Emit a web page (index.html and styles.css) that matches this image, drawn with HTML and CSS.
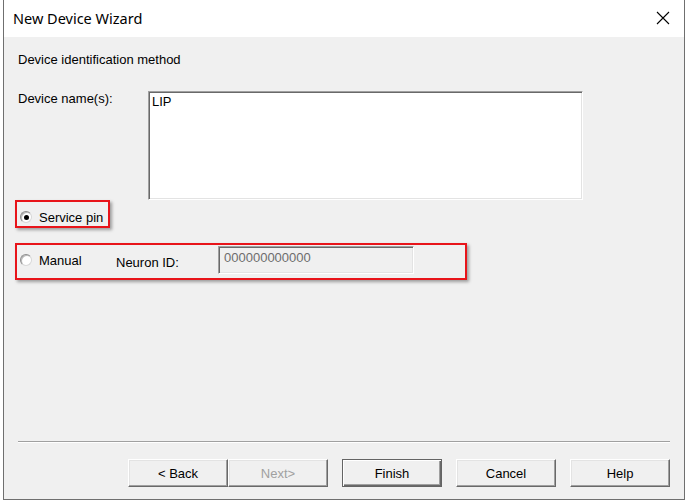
FILE: index.html
```html
<!DOCTYPE html>
<html>
<head>
<meta charset="utf-8">
<link rel="stylesheet" href="styles.css">
</head>
<body>
<div class="window">
  <div class="titlebar">
    <span class="title">New Device Wizard</span>
    <svg class="close" width="14" height="14" viewBox="0 0 14 14"><path d="M1 1 L13 13 M13 1 L1 13" stroke="#000" stroke-width="1.1" fill="none"/></svg>
  </div>
  <div class="content">
    <div class="heading">Device identification method</div>
    <div class="names-row">
      <div class="label">Device name(s):</div>
      <div class="textarea">LIP</div>
    </div>
    <div class="mark mark-service">
      <span class="radio checked"></span>
      <span class="opt">Service pin</span>
    </div>
    <div class="mark mark-manual">
      <span class="radio"></span>
      <span class="opt">Manual</span>
      <span class="neuron-label">Neuron ID:</span>
      <div class="neuron-input">000000000000</div>
    </div>
    <div class="footer">
      <div class="separator"></div>
      <div class="buttons">
        <div class="pair">
          <div class="btn">&lt; Back</div>
          <div class="btn disabled">Next&gt;</div>
        </div>
        <div class="btn default">Finish</div>
        <div class="btn">Cancel</div>
        <div class="btn">Help</div>
      </div>
    </div>
  </div>
</div>
</body>
</html>
```

FILE: styles.css
```css
html, body {
  margin: 0;
  padding: 0;
  background: #ffffff;
  width: 687px;
  height: 501px;
  overflow: hidden;
}

.window {
  margin-left: 3px;
  width: 680px;
  height: 499px;
  border-left: 1px solid #6f6f6f;
  border-right: 1px solid #6f6f6f;
  border-bottom: 1px solid #6f6f6f;
  display: flex;
  flex-direction: column;
  font-family: "Liberation Sans", Arial, sans-serif;
  font-size: 13px;
  color: #000;
}

.titlebar {
  height: 37px;
  background: #ffffff;
  display: flex;
  align-items: center;
  justify-content: space-between;
  padding: 0 14px 0 9px;
  flex-shrink: 0;
}

.title {
  font-family: "Noto Sans", "Open Sans", sans-serif;
  font-size: 14.5px;
  color: #000;
  margin-top: -1px;
}

.close {
  display: block;
  margin-top: -1px;
}

.content {
  flex: 1;
  background: #f0f0f0;
  display: flex;
  flex-direction: column;
  padding: 0 14px 0 14px;
}

.heading {
  margin-top: 15px;
  line-height: 15px;
}

.names-row {
  display: flex;
  margin-top: 24px;
}

.label {
  width: 130px;
  line-height: 15px;
}

.textarea {
  width: 430px;
  height: 105px;
  background: #fff;
  border-style: solid;
  border-width: 1px;
  border-color: #a0a0a0 #ffffff #ffffff #a0a0a0;
  box-shadow: inset 1px 1px 0 #696969, inset -1px -1px 0 #e3e3e3;
  padding: 2px 0 0 3px;
  line-height: 15px;
}

.mark {
  border: 2px solid #e8141a;
  box-shadow: 2px 2px 3px rgba(0, 0, 0, 0.35);
  margin-left: -3px;
  display: flex;
  align-items: flex-start;
  box-sizing: border-box;
}

.mark-service {
  width: 95px;
  height: 28px;
  margin-top: 0;
  padding: 9px 0 0 3px;
}

.mark-manual {
  width: 452px;
  height: 37px;
  margin-top: 15px;
  padding: 9px 0 0 3px;
}

.radio {
  width: 12px;
  height: 12px;
  border-radius: 50%;
  box-sizing: border-box;
  background: radial-gradient(circle at 60% 60%, #ffffff 0 50%, #f4f4f4 70%);
  border: 1px solid #8d8d8d;
  border-bottom-color: #d8d8d8;
  border-right-color: #d8d8d8;
  box-shadow: inset 1px 1px 0 #b8b8b8;
  position: relative;
  flex-shrink: 0;
}

.radio.checked::after {
  content: "";
  position: absolute;
  left: 2.5px;
  top: 2.5px;
  width: 5px;
  height: 5px;
  border-radius: 50%;
  background: #000;
}

.opt {
  margin-left: 7px;
  line-height: 15px;
  margin-top: -1.5px;
}

.mark-manual .opt {
  width: 77px;
}

.neuron-label {
  line-height: 15px;
  margin-top: 1px;
  width: 102px;
}

.neuron-input {
  margin-top: -8px;
  width: 189px;
  height: 23px;
  border-style: solid;
  border-width: 1px;
  border-color: #a0a0a0 #ffffff #ffffff #a0a0a0;
  box-shadow: inset 1px 1px 0 #696969, inset -1px -1px 0 #e3e3e3;
  background: #f0f0f0;
  color: #6d6d6d;
  padding: 3px 0 0 5px;
  line-height: 15px;
}

.footer {
  margin-top: auto;
  margin-bottom: 12px;
}

.separator {
  height: 1px;
  background: #a0a0a0;
  border-bottom: 1px solid #ffffff;
  width: 652px;
}

.buttons {
  margin-top: 16px;
  display: flex;
  justify-content: flex-end;
  gap: 14px;
}

.pair {
  display: flex;
}

.btn {
  width: 100px;
  height: 28px;
  box-sizing: border-box;
  display: flex;
  align-items: center;
  justify-content: center;
  background: #f0f0f0;
  border-style: solid;
  border-width: 1px;
  border-color: #ffffff #696969 #696969 #ffffff;
  box-shadow: inset -1px -1px 0 #a0a0a0, inset 1px 1px 0 #e3e3e3;
  font-size: 13px;
  line-height: 15px;
}

.btn.disabled {
  color: #a0a0a0;
}

.btn.default {
  border: 1px solid #646464;
  box-shadow: inset 1px 1px 0 #ffffff, inset -1px -1px 0 #696969, inset -2px -2px 0 #a0a0a0;
}
```
